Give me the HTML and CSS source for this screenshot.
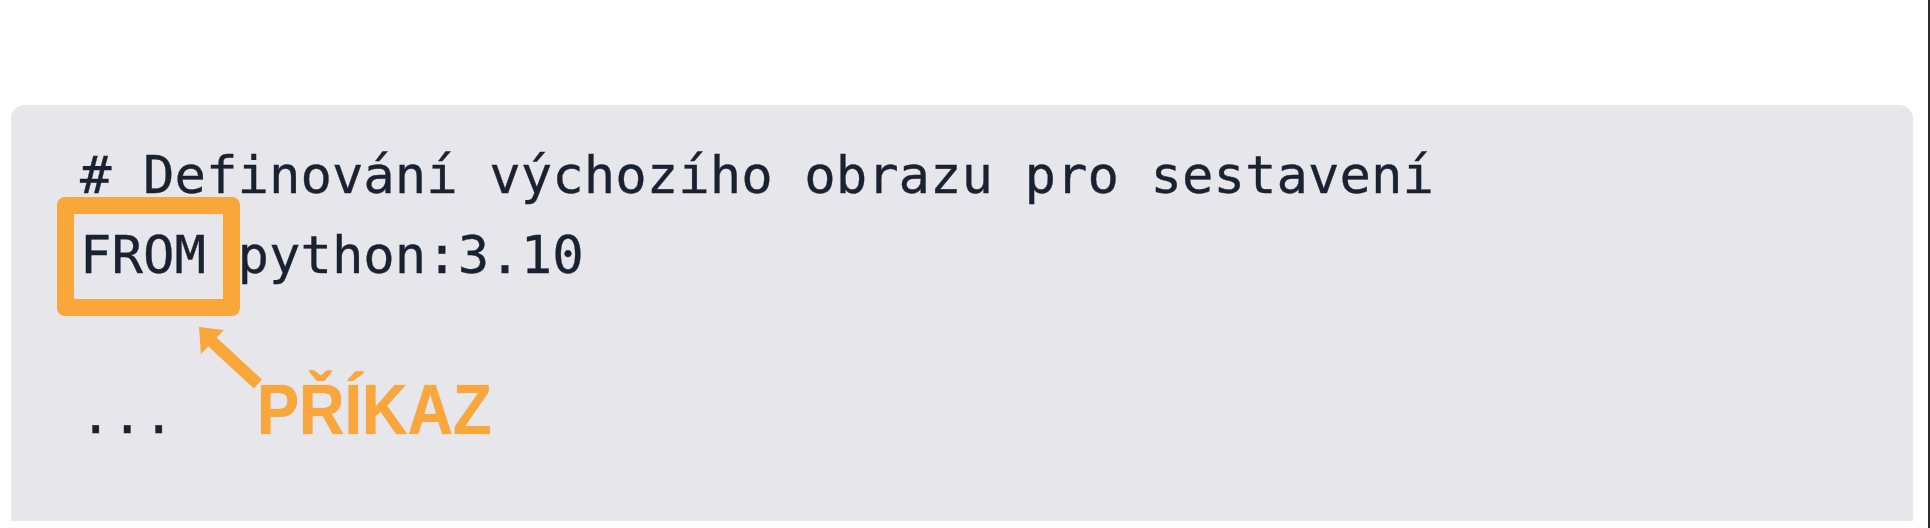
FILE: index.html
```html
<!DOCTYPE html>
<html lang="cs">
<head>
<meta charset="utf-8">
<title>Dockerfile – FROM</title>
<link rel="stylesheet" href="styles.css">
</head>
<body>
<div class="page">
  <div class="card">
    <pre class="code"><span class="line"># Definování výchozího obrazu pro sestavení</span>
<span class="line">FROM python:3.10</span>
<span class="line"> </span>
<span class="line">...</span></pre>
    <div class="highlight-box"></div>
    <svg class="arrow" width="90" height="90" viewBox="0 0 90 90" aria-hidden="true">
      <line x1="17" y1="19" x2="68" y2="66" stroke="#F9A63A" stroke-width="12"/>
      <polygon points="9,9 34,12 11,36" fill="#F9A63A"/>
    </svg>
    <div class="label">PŘÍKAZ</div>
  </div>
</div>
</body>
</html>
```
FILE: styles.css
```css
html, body {
  margin: 0;
  padding: 0;
  background: #ffffff;
}

.page {
  box-sizing: border-box;
  width: 1930px;
  height: 528px;
  padding: 105px 0 0 11px;
  border-right: 2px solid #2b2b2b;
}

.card {
  position: relative;
  box-sizing: border-box;
  width: 1902px;
  height: 416px;
  background: #e7e6eb;
  border-radius: 14px 14px 0 0;
  padding: 30px 0 0 69px;
}

.code {
  margin: 0;
  font-family: "DejaVu Sans Mono", "Liberation Mono", monospace;
  font-size: 52.3px;
  line-height: 80px;
  color: #1a2231;
  -webkit-text-stroke: 0.35px #1a2231;
  white-space: pre;
}

.highlight-box {
  position: absolute;
  left: 46px;
  top: 92px;
  width: 183px;
  height: 119px;
  box-sizing: border-box;
  border: 17px solid #f9a63a;
  border-radius: 8px;
}

.arrow {
  position: absolute;
  left: 179px;
  top: 213px;
}

.label {
  position: absolute;
  left: 246px;
  top: 270px;
  font-family: "Liberation Sans", Arial, sans-serif;
  font-weight: bold;
  font-size: 70px;
  line-height: 70px;
  color: #f9a63a;
  transform: scaleX(0.9);
  transform-origin: left center;
  text-shadow: 0 0 1px rgba(214, 130, 30, 0.7);
}
```
